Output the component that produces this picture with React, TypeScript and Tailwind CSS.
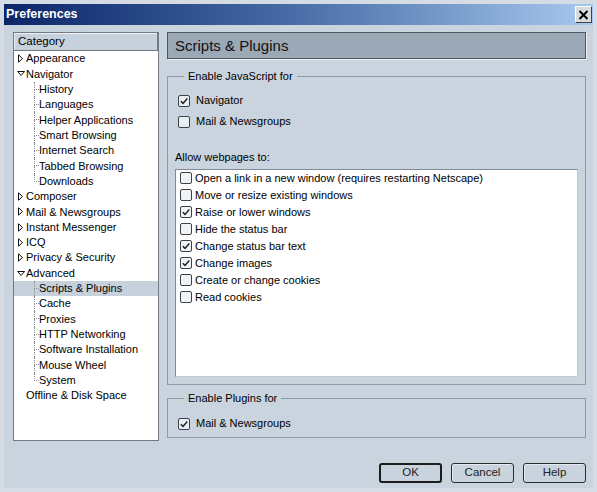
import React from "react";

const FONT = { fontFamily: '"Liberation Sans", Arial, sans-serif' };

function Check({ checked, inList }: { checked?: boolean; inList?: boolean }) {
  return (
    <span
      className={`inline-flex items-center justify-center w-[12px] h-[12px] shrink-0 rounded-[2px] border border-[#3a434c] ${
        inList ? "bg-[#f1f4f7]" : "bg-[#e9eef3]"
      }`}
    >
      {checked && (
        <svg width="10" height="10" viewBox="0 0 10 10">
          <path d="M1.8 5.2 L4 7.4 L8.3 2.4" fill="none" stroke="#222" strokeWidth="1.5" />
        </svg>
      )}
    </span>
  );
}

function Collapsed() {
  return (
    <svg width="9" height="9" viewBox="0 0 9 9" className="shrink-0">
      <polygon points="1.5,0.8 5.5,4.5 1.5,8.2" fill="none" stroke="#111" strokeWidth="1" />
    </svg>
  );
}

function Expanded() {
  return (
    <svg width="9" height="9" viewBox="0 0 9 9" className="shrink-0">
      <polygon points="0.6,2.5 7.6,2.5 4.1,6.5" fill="none" stroke="#111" strokeWidth="1" />
    </svg>
  );
}

type Top = { label: string; state: "collapsed" | "expanded" | "none"; children?: string[] };

const tree: Top[] = [
  { label: "Appearance", state: "collapsed" },
  {
    label: "Navigator",
    state: "expanded",
    children: [
      "History",
      "Languages",
      "Helper Applications",
      "Smart Browsing",
      "Internet Search",
      "Tabbed Browsing",
      "Downloads",
    ],
  },
  { label: "Composer", state: "collapsed" },
  { label: "Mail & Newsgroups", state: "collapsed" },
  { label: "Instant Messenger", state: "collapsed" },
  { label: "ICQ", state: "collapsed" },
  { label: "Privacy & Security", state: "collapsed" },
  {
    label: "Advanced",
    state: "expanded",
    children: [
      "Scripts & Plugins",
      "Cache",
      "Proxies",
      "HTTP Networking",
      "Software Installation",
      "Mouse Wheel",
      "System",
    ],
  },
  { label: "Offline & Disk Space", state: "none" },
];

function ChildRow({ label, last, selected }: { label: string; last: boolean; selected: boolean }) {
  return (
    <div className={`flex h-[15.32px] items-stretch ${selected ? "bg-[#c6d1dc]" : ""}`}>
      <div className="w-[20px] shrink-0" />
      <div className="flex flex-col w-[5px] shrink-0">
        <div className="flex-1 border-l border-b border-dotted border-[#8a8a8a]" />
        <div className={`flex-1 ${last ? "" : "border-l border-dotted border-[#8a8a8a]"}`} />
      </div>
      <span className="flex items-center whitespace-nowrap">{label}</span>
    </div>
  );
}

function Tree() {
  return (
    <div className="w-[146px] h-full shrink-0 border border-[#6f7a85] bg-white flex flex-col">
      <div className="h-[18px] shrink-0 bg-[#c6d1dc] border-b border-[#6f7a85] border-r border-r-[#6f7a85] shadow-[inset_1px_1px_0_#eef2f6] flex items-center pl-[4px] text-[11.5px]">
        Category
      </div>
      <div className="flex flex-col text-[11px] text-black">
        {tree.map((t) => (
          <React.Fragment key={t.label}>
            <div className="flex h-[15.32px] items-center">
              <div className="w-[3px] shrink-0" />
              {t.state === "collapsed" ? (
                <Collapsed />
              ) : t.state === "expanded" ? (
                <Expanded />
              ) : (
                <span className="w-[9px] shrink-0" />
              )}
              <span className="whitespace-nowrap">{t.label}</span>
            </div>
            {t.children?.map((c, i) => (
              <ChildRow
                key={c}
                label={c}
                last={i === t.children!.length - 1}
                selected={c === "Scripts & Plugins"}
              />
            ))}
          </React.Fragment>
        ))}
      </div>
    </div>
  );
}

function CheckRow({ label, checked }: { label: string; checked?: boolean }) {
  return (
    <div className="flex items-center h-[21px] gap-[6px]">
      <Check checked={checked} />
      <span>{label}</span>
    </div>
  );
}

const allow: [string, boolean][] = [
  ["Open a link in a new window (requires restarting Netscape)", false],
  ["Move or resize existing windows", false],
  ["Raise or lower windows", true],
  ["Hide the status bar", false],
  ["Change status bar text", true],
  ["Change images", true],
  ["Create or change cookies", false],
  ["Read cookies", false],
];

function Button({ label, primary }: { label: string; primary?: boolean }) {
  return (
    <button
      className={`w-[63px] h-[20px] rounded-[3px] bg-[#c9d3dd] text-[11.5px] text-[#222] flex items-center justify-center ${
        primary ? "border-2 border-[#1c1c1c]" : "border border-[#2c2c2c] shadow-[inset_1px_1px_0_#e4eaf0]"
      }`}
    >
      {label}
    </button>
  );
}

export default function App() {
  return (
    <div
      style={FONT}
      className="w-[597px] h-[492px] bg-[#c9d4de] border-[4px] border-[#d5dce3] flex flex-col text-[11px] text-black overflow-hidden"
    >
      {/* Title bar */}
      <div className="h-[21px] shrink-0 bg-gradient-to-r from-[#0c2568] via-[#4a6ea8] to-[#a8c9ee] flex items-center justify-between pl-[2px] pr-[1px]">
        <span className="text-white font-bold text-[12.5px]">Preferences</span>
        <div className="w-[17px] h-[17px] bg-[#d8dcdf] border border-t-white border-l-white border-b-[#404040] border-r-[#404040] flex items-center justify-center">
          <svg width="11" height="10" viewBox="0 0 11 10">
            <path d="M1.5 1 L9.5 9 M9.5 1 L1.5 9" stroke="#000" strokeWidth="2" />
          </svg>
        </div>
      </div>

      <div className="flex-1 flex flex-col pt-[7px] pl-[9px] pr-[7px]">
        <div className="h-[409px] flex gap-[8px]">
          <Tree />

          <div className="flex-1 flex flex-col">
            <div className="h-[27px] shrink-0 bg-[#9ba8b5] border border-[#4c5661] shadow-[1px_1px_0_#eef2f5] flex items-center pl-[7px] pt-[1px] text-[15px] text-[#111]">
              Scripts &amp; Plugins
            </div>

            <fieldset className="mt-[10px] border border-[#8d99a5] pl-[10px] pr-[7px] pb-[7px] pt-[7px]">
              <legend className="ml-[6px] px-[4px] leading-[14px] text-[11px]">Enable JavaScript for</legend>
              <CheckRow label="Navigator" checked />
              <CheckRow label="Mail & Newsgroups" />
              <div className="-ml-[3px] mt-[18px] leading-[14px]">Allow webpages to:</div>
              <div className="-ml-[3px] mt-[5px] h-[208px] bg-white border border-[#7f8a95] border-r-[#c0c8d0] border-b-[#c0c8d0] pl-[4px]">
                {allow.map(([l, c]) => (
                  <div key={l} className="flex items-center h-[16.95px] gap-[3px]">
                    <Check checked={c} inList />
                    <span className="whitespace-nowrap">{l}</span>
                  </div>
                ))}
              </div>
            </fieldset>

            <fieldset className="mt-[6px] border border-[#8d99a5] pl-[10px] pr-[7px] pt-[8px] pb-[3px]">
              <legend className="ml-[6px] px-[4px] leading-[14px] text-[11px]">Enable Plugins for</legend>
              <CheckRow label="Mail & Newsgroups" checked />
            </fieldset>
          </div>
        </div>

        <div className="mt-[22px] flex justify-end gap-[9px]">
          <Button label="OK" primary />
          <Button label="Cancel" />
          <Button label="Help" />
        </div>
      </div>
    </div>
  );
}
